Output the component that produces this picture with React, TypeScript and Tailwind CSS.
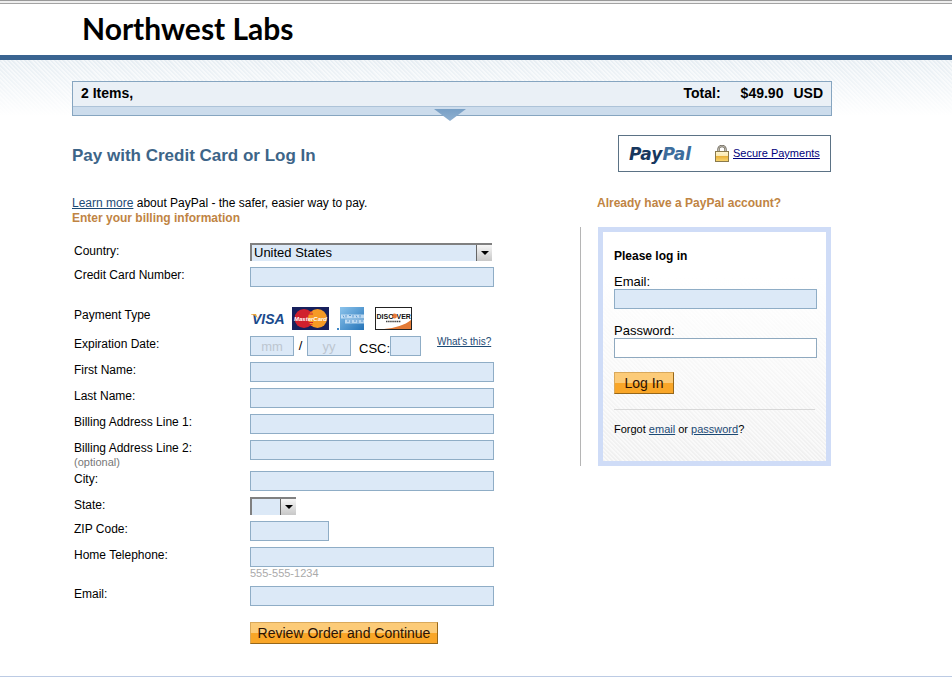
import type { ReactNode } from "react";

const inputClass = "block h-5 border border-[#8fadc6] bg-[#dce9f7] px-1 text-[13px] text-black outline-none";
const linkClass = "text-[#1c4a75] underline";
const buttonClass =
  "block h-[22px] whitespace-nowrap border border-t-[#d9a95c] border-l-[#d9a95c] border-r-[#96671a] border-b-[#96671a] bg-linear-to-b from-[#fccb78] from-50% to-[#f9a628] to-50% text-[14px] leading-5 text-[#2a1204]";

function Row({ id, label, note, gap = "mb-1.5", children }: { id?: string; label: string; note?: string; gap?: string; children: ReactNode }) {
  return (
    <div className={`flex items-start ${gap}`}>
      <div className="w-[178px] shrink-0 pl-0.5">
        {id ? (
          <label htmlFor={id} className="block text-xs leading-4">{label}</label>
        ) : (
          <span className="block text-xs leading-4">{label}</span>
        )}
        {note && <span className="block text-[11px] leading-[13px] text-[#777]">{note}</span>}
      </div>
      {children}
    </div>
  );
}

function Dropdown({ id, width, options }: { id: string; width: string; options: string[] }) {
  return (
    <div className={`relative h-[18px] ${width}`}>
      <select
        id={id}
        className="block h-[18px] w-full appearance-none border-t-2 border-l-2 border-[#808080] bg-[#dce9f7] pl-0.5 text-[13px] leading-4 text-black outline-none"
      >
        {options.map((o) => (
          <option key={o}>{o}</option>
        ))}
      </select>
      <span className="pointer-events-none absolute top-0.5 right-0 bottom-0 flex w-4 items-center justify-center border-l border-[#666] bg-linear-to-b from-[#f6f6f6] to-[#c8c8c8]">
        <svg width="8" height="4" viewBox="0 0 8 4"><path d="M0 0h8L4 4z" fill="#000" /></svg>
      </span>
    </div>
  );
}

function Visa() {
  return (
    <svg width="36" height="23" viewBox="0 0 36 23" role="img" aria-label="Visa">
      <text x="2" y="17" fontFamily="'Liberation Sans', sans-serif" fontWeight="700" fontStyle="italic" fontSize="14" fill="#1a4a8c">VISA</text>
      <path d="M1 7h5l2 5C6 9 4 8 1 7.500z" fill="#e9a63a" />
    </svg>
  );
}

function MasterCard() {
  return (
    <svg width="37" height="23" viewBox="0 0 37 23" role="img" aria-label="MasterCard">
      <rect width="37" height="23" fill="#17205c" />
      <circle cx="12" cy="11.500" r="9.500" fill="#d0202e" />
      <circle cx="25.500" cy="11.500" r="9.500" fill="#f59a24" />
      <path d="M18.700 4.800h1.600M17 7h4M17 15.500h4M18 17.700h2.500" stroke="#d0202e" strokeWidth="1" />
      <text x="18.500" y="13.500" textAnchor="middle" fontFamily="'Liberation Sans', sans-serif" fontWeight="700" fontStyle="italic" fontSize="6" fill="#fff">MasterCard</text>
    </svg>
  );
}

function Amex() {
  return (
    <svg width="28" height="23" viewBox="0 0 28 23" role="img" aria-label="American Express">
      <defs>
        <linearGradient id="amex" x1="0" y1="0" x2="1" y2="1">
          <stop offset="0" stopColor="#8cc4ec" />
          <stop offset="1" stopColor="#2473b8" />
        </linearGradient>
      </defs>
      <rect x="3" width="24" height="23" fill="url(#amex)" />
      <rect x="0" y="21" width="2" height="2" fill="#3f87c6" />
      <rect x="4" y="7.500" width="23" height="4" fill="#d7eafa" opacity="0.800" />
      <rect x="8" y="12.500" width="19" height="4" fill="#d7eafa" opacity="0.800" />
      <path d="M6 8.500l1 2M9 8v2.500M12 8.500h2M16 8v2.500M19 8.500l1 2M23 8v2.500M10 14h2M14 13v3M17 14h2M21 13v3M24 14h2" stroke="#3f87c6" strokeWidth="0.800" />
    </svg>
  );
}

function Discover() {
  return (
    <svg width="37" height="23" viewBox="0 0 37 23" role="img" aria-label="Discover Network">
      <rect x="0.500" y="0.500" width="36" height="22" fill="#fff" stroke="#222" />
      <path d="M36 13v9H9C20 21 30 18 36 13z" fill="#e27a36" />
      <circle cx="19.400" cy="9" r="2.500" fill="#e8793a" />
      <text x="1.500" y="11.500" fontFamily="'Liberation Sans', sans-serif" fontWeight="700" fontSize="7" fill="#111">DISC</text>
      <text x="21.500" y="11.500" fontFamily="'Liberation Sans', sans-serif" fontWeight="700" fontSize="7" fill="#111">VER</text>
      <path d="M11 14.500h15" stroke="#444" strokeWidth="1.400" strokeDasharray="1.500 0.600" />
    </svg>
  );
}

function PayPalLogo() {
  return (
    <svg width="68" height="28" viewBox="0 0 68 28" role="img" aria-label="PayPal">
      <text x="0" y="20" fontFamily="'DejaVu Sans', sans-serif" fontWeight="700" fontStyle="italic" fontSize="17">
        <tspan fill="#17375e">Pay</tspan>
        <tspan fill="#3c6d9c">Pal</tspan>
      </text>
    </svg>
  );
}

function Lock() {
  return (
    <svg width="14" height="17" viewBox="0 0 14 17" aria-hidden="true">
      <defs>
        <linearGradient id="brass" x1="0" y1="0" x2="0" y2="1">
          <stop offset="0" stopColor="#fff6cf" />
          <stop offset="0.450" stopColor="#fbe9b0" />
          <stop offset="0.500" stopColor="#eab33c" />
          <stop offset="1" stopColor="#f9d873" />
        </linearGradient>
      </defs>
      <path d="M3.500 7V4a3.500 3 0 0 1 7 0v3" fill="none" stroke="#6b665c" strokeWidth="2.400" />
      <path d="M3.500 7V4a3.500 3 0 0 1 7 0v3" fill="none" stroke="#d5d0c2" strokeWidth="0.800" />
      <rect x="0.500" y="6.500" width="13" height="10" fill="url(#brass)" stroke="#8a7a4c" />
    </svg>
  );
}

export default function App() {
  return (
    <div className="bg-white font-['Liberation_Sans',Arial,sans-serif] text-black">
      <header className="border-t border-[#999]">
        <div className="h-[3px] border-b border-[#a3a3a3] bg-[#eee]" />
        <div className="h-[51px] pl-[82px]">
          <h1 className="font-[Lato,sans-serif] text-[30px] leading-[48px] font-bold">Northwest Labs</h1>
        </div>
        <div className="h-[5px] bg-[#3a6491]" />
      </header>

      <div className="bg-[linear-gradient(to_bottom,rgba(255,255,255,0),#fff_56px),repeating-linear-gradient(45deg,#e7eef3_0_1px,#f5f8fa_2px_3px)] pt-[21px]">
        <main className="mr-[120px] ml-[72px] pb-8">
          <section className="relative border border-[#86a5c0] text-sm font-bold">
            <div className="flex h-6 items-center bg-[#eaf0f6] px-2 pb-0.5">
              <span className="flex-1">2 Items,</span>
              <span>Total:</span>
              <span className="ml-5">$49.90</span>
              <span className="ml-2.5">USD</span>
            </div>
            <div className="h-[9px] border-t border-[#adc3d8] bg-[#ccdcec]" />
            <svg className="absolute top-[27px] left-1/2 -ml-[18px]" width="32" height="13" viewBox="0 0 32 13" aria-hidden="true">
              <defs>
                <linearGradient id="pointer" x1="0" y1="0" x2="0" y2="1">
                  <stop offset="0" stopColor="#78a0c6" />
                  <stop offset="1" stopColor="#8fb0d0" />
                </linearGradient>
              </defs>
              <path d="M0 0h32L16 12z" fill="url(#pointer)" />
            </svg>
          </section>

          <div className="mt-[19px] flex items-start justify-between">
            <h2 className="pt-[11px] text-[17px] leading-5 font-bold text-[#3d6588]">Pay with Credit Card or Log In</h2>
            <div className="mr-px flex h-[37px] w-[213px] items-center border border-[#5b7285] pl-2.5">
              <PayPalLogo />
              <span className="ml-[18px]"><Lock /></span>
              <a href="#secure" className="ml-1 text-[11px] whitespace-nowrap text-[#00007c] underline">Secure Payments</a>
            </div>
          </div>

          <div className="mt-6 flex items-start justify-between">
            <form onSubmit={(e) => e.preventDefault()}>
              <p className="text-xs leading-[15px]">
                <a href="#learn" className={linkClass}>Learn more</a> about PayPal - the safer, easier way to pay.
              </p>
              <h3 className="mb-[17px] text-xs leading-[15px] font-bold text-[#c08443]">Enter your billing information</h3>

              <Row id="country" label="Country:">
                <Dropdown id="country" width="w-[242px]" options={["United States"]} />
              </Row>
              <Row id="card" label="Credit Card Number:" gap="mb-5">
                <input id="card" className={`${inputClass} w-[244px]`} />
              </Row>
              <Row label="Payment Type">
                <div className="flex h-[23px] items-start">
                  <span className="mr-1.5"><Visa /></span>
                  <span className="mr-2"><MasterCard /></span>
                  <span className="mr-2.5"><Amex /></span>
                  <Discover />
                </div>
              </Row>
              <Row id="month" label="Expiration Date:">
                <div className="flex h-5 items-start">
                  <input id="month" placeholder="mm" className={`${inputClass} w-11 text-center placeholder:text-[#bcc6d0]`} />
                  <span className="w-[13px] text-center text-[13px] leading-5">/</span>
                  <input aria-label="Expiration year" placeholder="yy" className={`${inputClass} w-11 text-center placeholder:text-[#bcc6d0]`} />
                  <label htmlFor="csc" className="ml-2 pt-[5px] text-[13px] leading-4">CSC:</label>
                  <input id="csc" className={`${inputClass} w-[31px]`} />
                  <a href="#csc-help" className={`${linkClass} ml-4 text-[10px] leading-3`}>What's this?</a>
                </div>
              </Row>
              <Row id="first" label="First Name:">
                <input id="first" className={`${inputClass} w-[244px]`} />
              </Row>
              <Row id="last" label="Last Name:">
                <input id="last" className={`${inputClass} w-[244px]`} />
              </Row>
              <Row id="addr1" label="Billing Address Line 1:">
                <input id="addr1" className={`${inputClass} w-[244px]`} />
              </Row>
              <Row id="addr2" label="Billing Address Line 2:" note="(optional)" gap="mb-0.5">
                <input id="addr2" className={`${inputClass} w-[244px]`} />
              </Row>
              <Row id="city" label="City:">
                <input id="city" className={`${inputClass} w-[244px]`} />
              </Row>
              <Row id="state" label="State:">
                <Dropdown id="state" width="w-[46px]" options={[""]} />
              </Row>
              <Row id="zip" label="ZIP Code:">
                <input id="zip" className={`${inputClass} w-[79px]`} />
              </Row>
              <Row id="phone" label="Home Telephone:">
                <div>
                  <input id="phone" className={`${inputClass} w-[244px]`} />
                  <span className="block text-[11px] leading-[13px] text-[#aaa]">555-555-1234</span>
                </div>
              </Row>
              <Row id="email" label="Email:" gap="mb-4">
                <input id="email" className={`${inputClass} w-[244px]`} />
              </Row>
              <button type="submit" className={`${buttonClass} ml-[178px] w-[188px]`}>Review Order and Continue</button>
            </form>

            <aside className="mr-px w-[251px] shrink-0">
              <h3 className="mb-4 pl-[17px] text-xs leading-[15px] font-bold text-[#c08443]">Already have a PayPal account?</h3>
              <div className="border-l border-[#b5b5b5] pl-[17px]">
                <form
                  onSubmit={(e) => e.preventDefault()}
                  className="border-[5px] border-[#cfdcf7] bg-[linear-gradient(to_bottom,#fff_20%,rgba(255,255,255,0)),repeating-linear-gradient(45deg,#f0f0f0_0_1px,#f9f9f9_2px_3px)] pt-4 pr-[9px] pb-[25px] pl-[11px]"
                >
                  <h4 className="text-xs leading-4 font-bold">Please log in</h4>
                  <label htmlFor="login-email" className="mt-[11px] block text-[13px] leading-[14px]">Email:</label>
                  <input id="login-email" className={`${inputClass} w-full`} />
                  <label htmlFor="login-password" className="mt-[15px] block text-[13px] leading-[14px]">Password:</label>
                  <input id="login-password" type="password" className="block h-5 w-full border border-[#8fa9bf] bg-white px-1 text-[13px] outline-none" />
                  <button type="submit" className={`${buttonClass} mt-3.5 w-[60px]`}>Log In</button>
                  <hr className="mt-[15px] mr-0.5 border-[#d8d8d8]" />
                  <p className="mt-3 text-[11px] leading-[14px]">
                    Forgot <a href="#email" className={linkClass}>email</a> or <a href="#password" className={linkClass}>password</a>?
                  </p>
                </form>
              </div>
            </aside>
          </div>
        </main>
        <footer className="h-px bg-[#bccbe4]" />
      </div>
    </div>
  );
}
